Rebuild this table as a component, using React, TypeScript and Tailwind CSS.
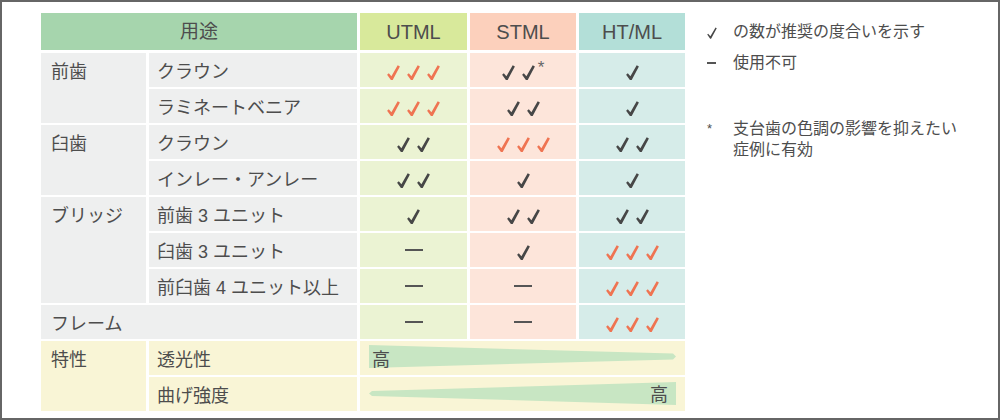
type Mark = number | 'dash'

function Check({ orange = false }: { orange?: boolean }) {
  return (
    <svg width="13" height="15" viewBox="0 0 13 15" className={orange ? 'text-[#ef7452]' : 'text-[#474747]'}>
      <path d="M0.1 9.7 L1.8 8.3 L4.4 11.3 L10.7 0.2 L12.9 1.4 L5.7 14.9 L3.9 14.9 Z" fill="currentColor" />
    </svg>
  )
}

function Marks({ value, orange = false, star = false }: { value: Mark; orange?: boolean; star?: boolean }) {
  if (value === 'dash') {
    return <div className="w-[18px] h-[2px] bg-[#555555]" />
  }
  return (
    <div className="flex items-center gap-[7px] pt-[4px]">
      {Array.from({ length: value }).map((_, i) => (
        <Check key={i} orange={orange} />
      ))}
      {star && <span className="-ml-[4px] -mt-[10px] text-[17px] leading-none text-[#666666]">*</span>}
    </div>
  )
}

type Row = {
  group?: { label: string; span: 'row-span-2' | 'row-span-3' }
  name: string
  wide?: boolean
  u: Mark
  s: Mark
  h: Mark
  uo?: boolean
  so?: boolean
  ho?: boolean
  star?: boolean
}

const rows: Row[] = [
  { group: { label: '前歯', span: 'row-span-2' }, name: 'クラウン', u: 3, uo: true, s: 2, star: true, h: 1 },
  { name: 'ラミネートベニア', u: 3, uo: true, s: 2, h: 1 },
  { group: { label: '臼歯', span: 'row-span-2' }, name: 'クラウン', u: 2, s: 3, so: true, h: 2 },
  { name: 'インレー・アンレー', u: 2, s: 1, h: 1 },
  { group: { label: 'ブリッジ', span: 'row-span-3' }, name: '前歯 3 ユニット', u: 1, s: 2, h: 2 },
  { name: '臼歯 3 ユニット', u: 'dash', s: 1, h: 3, ho: true },
  { name: '前臼歯 4 ユニット以上', u: 'dash', s: 'dash', h: 3, ho: true },
  { name: 'フレーム', wide: true, u: 'dash', s: 'dash', h: 3, ho: true },
]

export default function App() {
  return (
    <div
      className="w-[1000px] h-[420px] box-border border-2 border-[#666666] bg-white flex pl-[39px] pt-[11px] text-[#4d4d4d]"
      style={{ fontFamily: '"Liberation Sans", "Noto Sans CJK JP", sans-serif' }}
    >
      <div className="grid grid-cols-[105px_208px_107px_106px_106px] grid-rows-[38px_repeat(10,34px)] gap-x-[3px] gap-y-[2px] text-[18px] leading-none">
        {/* header */}
        <div className="col-span-2 mb-[1px] bg-[#a6d5ad] flex items-center justify-center text-[19px]">用途</div>
        <div className="mb-[1px] bg-[#d8e99b] flex items-center justify-center text-[20px]">UTML</div>
        <div className="mb-[1px] bg-[#fcd0bc] flex items-center justify-center text-[20px]">STML</div>
        <div className="mb-[1px] bg-[#b3dfd8] flex items-center justify-center text-[20px]">HT/ML</div>

        {rows.map((r, i) => (
          <>
            {r.group && (
              <div key={`g${i}`} className={`${r.group.span} bg-[#eeefef] pl-[10px]`}>
                <div className="h-[34px] flex items-center pt-[3px]">{r.group.label}</div>
              </div>
            )}
            <div
              key={`n${i}`}
              className={`${r.wide ? 'col-span-2 pl-[10px]' : 'pl-[8px]'} bg-[#eeefef] flex items-center pt-[3px]`}
            >
              {r.name}
            </div>
            <div key={`u${i}`} className="bg-[#ebf3d3] flex items-center justify-center">
              <Marks value={r.u} orange={r.uo} />
            </div>
            <div key={`s${i}`} className="bg-[#fde5da] flex items-center justify-center">
              <Marks value={r.s} orange={r.so} star={r.star} />
            </div>
            <div key={`h${i}`} className="bg-[#d6ece9] flex items-center justify-center">
              <Marks value={r.h} orange={r.ho} />
            </div>
          </>
        ))}

        {/* characteristics */}
        <div className="row-span-2 bg-[#f9f5d6] pl-[10px]">
          <div className="h-[34px] flex items-center pt-[3px]">特性</div>
        </div>
        <div className="bg-[#f9f5d6] pl-[8px] flex items-center pt-[3px]">透光性</div>
        <div className="col-span-3 relative bg-[#f9f5d6] flex items-center pl-[12px]">
          <svg className="absolute left-[9px] right-[9px] top-[4px] w-[307px] h-[23px]" viewBox="0 0 307 23" preserveAspectRatio="none">
            <polygon points="0,0 304,8.5 307,11.5 304,14.5 0,23" fill="#c8e6c3" />
          </svg>
          <span className="relative pt-[4px]">高</span>
        </div>
        <div className="bg-[#f9f5d6] pl-[8px] flex items-center pt-[3px]">曲げ強度</div>
        <div className="col-span-3 relative bg-[#f9f5d6] flex items-center justify-end pr-[17px]">
          <svg className="absolute left-[9px] top-[5px] w-[307px] h-[23px]" viewBox="0 0 307 23" preserveAspectRatio="none">
            <polygon points="3,9 307,0 307,23 3,14 0,11.5" fill="#c8e6c3" />
          </svg>
          <span className="relative pt-[2px]">高</span>
        </div>
      </div>

      {/* legend */}
      <div className="ml-[22px] mt-[8px] grid grid-cols-[26px_auto] text-[16px] leading-[21px] content-start">
        <span className="flex items-center pt-[2px]">
          <svg width="10" height="12" viewBox="0 0 13 15" className="text-[#474747]">
            <path d="M0.3 9.6 L1.5 8.6 L4.4 11.8 L11.1 0.3 L12.7 1.2 L5.3 14.9 L4.1 14.9 Z" fill="currentColor" />
          </svg>
        </span>
        <span>の数が推奨の度合いを示す</span>
        <span className="mt-[10px] flex items-center">
          <span className="block w-[9px] h-[2px] bg-[#555555]" />
        </span>
        <span className="mt-[10px]">使用不可</span>
        <span className="mt-[45px] text-[13px]">*</span>
        <span className="mt-[45px]">
          支台歯の色調の影響を抑えたい
          <br />
          症例に有効
        </span>
      </div>
    </div>
  )
}
